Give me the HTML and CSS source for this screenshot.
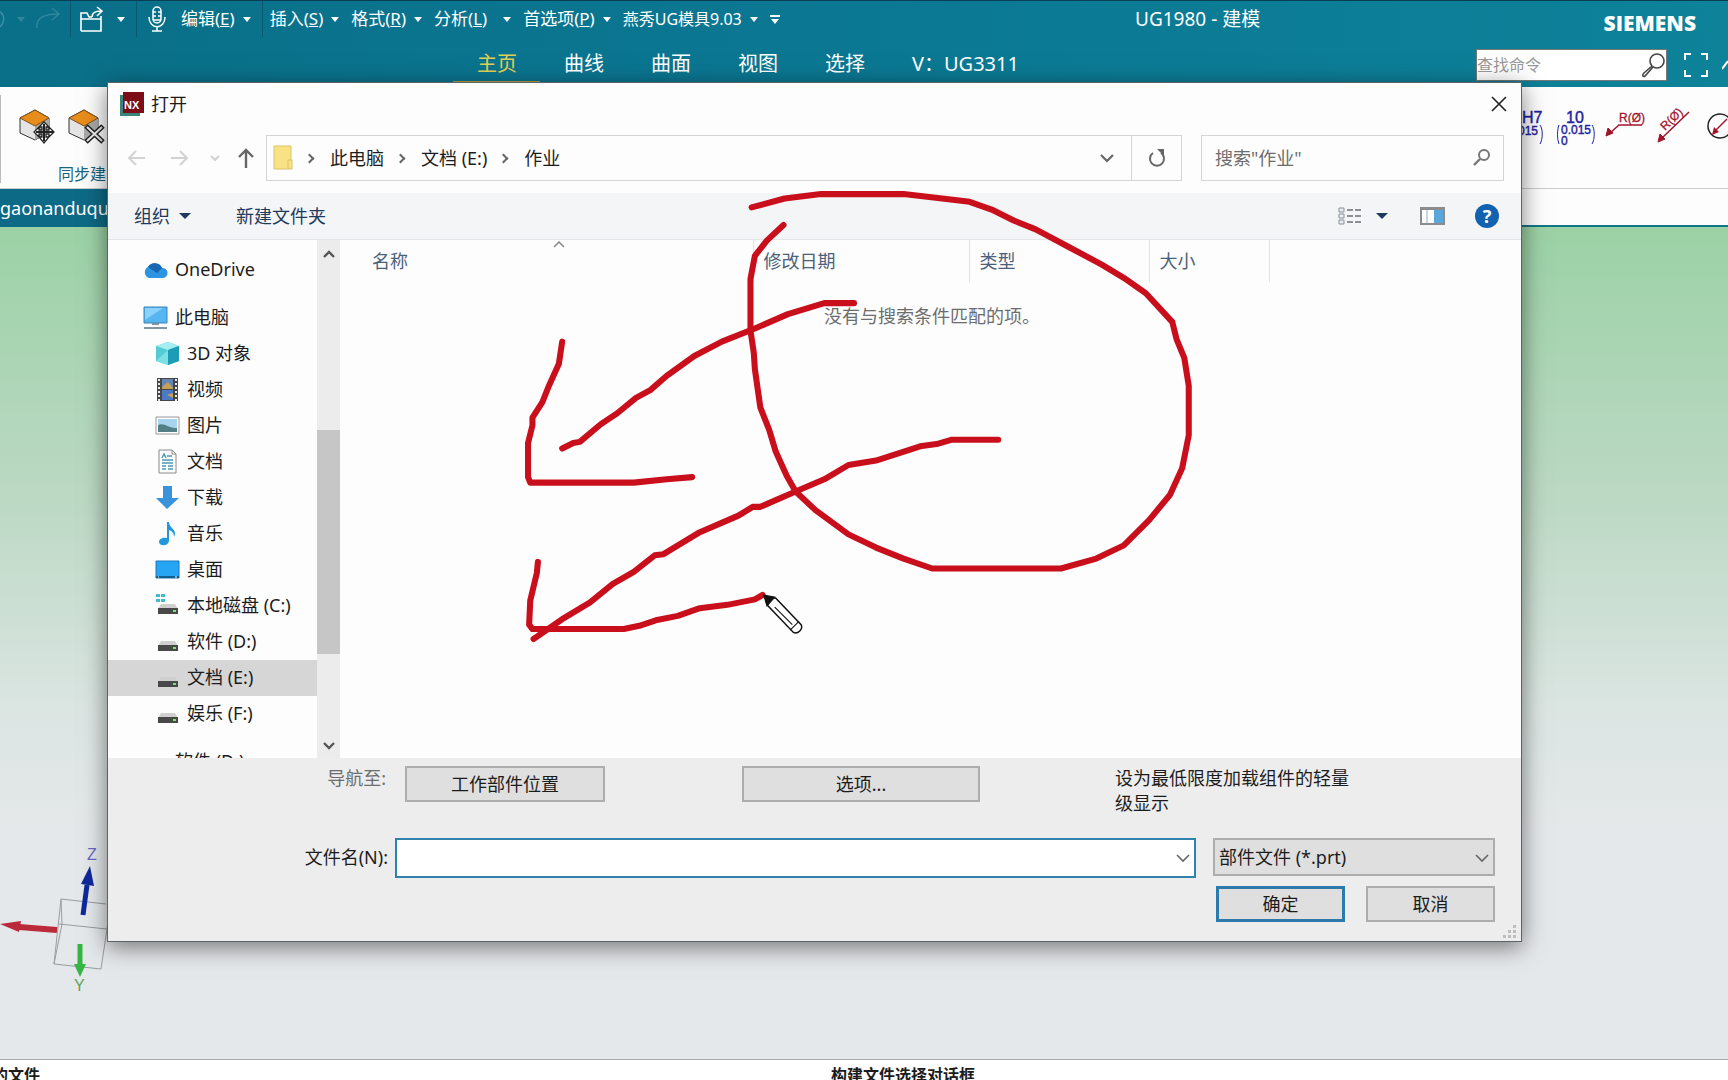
FILE: index.html
```html
<!DOCTYPE html>
<html lang="zh-CN">
<head>
<meta charset="utf-8">
<title>UG1980 - 建模</title>
<link rel="stylesheet" href="styles.css">
</head>
<body>
<div class="app">
  <header class="top">
    <div class="menubar">
      <div class="quick">
        <button class="qbtn undo" aria-label="撤消"><svg width="14" height="26" viewBox="0 0 14 26"><path d="M0 6c5 3 5 10 0 15" fill="none" stroke="#3a8fa6" stroke-width="1.500"/></svg><i class="tri dim"></i></button>
        <button class="qbtn redo" aria-label="重做"><svg width="28" height="28" viewBox="0 0 28 28"><path d="M3 23C2 13 9 9 25 9M18 3l7 6-7 6" fill="none" stroke="#2f869d" stroke-width="1.500"/></svg></button>
        <button class="qbtn open" aria-label="打开"><svg width="26" height="28" viewBox="0 0 26 28"><path d="M2 26V8h6l2 4h3M2 26h20V14H2M22 14V11M13 12c0-4 3-6 9-6M18 2l5 4-5 5" fill="none" stroke="#fff" stroke-width="1.600"/></svg><i class="tri"></i></button>
        <button class="qbtn mic" aria-label="语音"><svg width="20" height="28" viewBox="0 0 20 28"><rect x="6" y="2" width="8" height="16" rx="4" fill="none" stroke="#fff" stroke-width="1.500"/><path d="M2 12c0 13 16 13 16 0M10 22v4M5 26h10M6 7h3M11 7h3M6 11h3M11 11h3M6 15h8" fill="none" stroke="#fff" stroke-width="1.500"/></svg></button>
      </div>
      <nav class="menus">
        <button class="menu last">编辑(<u>E</u>)<i class="tri"></i></button>
        <button class="menu">插入(<u>S</u>)<i class="tri"></i></button>
        <button class="menu">格式(<u>R</u>)<i class="tri"></i></button>
        <button class="menu wide">分析(<u>L</u>)<i class="tri"></i></button>
        <button class="menu">首选项(<u>P</u>)<i class="tri"></i></button>
        <button class="menu mold">燕秀UG模具9.03<i class="tri"></i></button>
        <button class="more" aria-label="更多"><i class="tri"></i></button>
      </nav>
      <div class="apptitle">UG1980 - 建模</div>
      <div class="brand">SIEMENS</div>
    </div>
    <div class="tabbar">
      <nav class="tabs">
        <button class="tab on">主页</button>
        <button class="tab">曲线</button>
        <button class="tab">曲面</button>
        <button class="tab">视图</button>
        <button class="tab">选择</button>
        <button class="tab">V：UG3311</button>
      </nav>
      <div class="tabtools">
        <div class="find">
          <input class="findbox" type="text" aria-label="查找命令" placeholder="查找命令">
          <svg width="26" height="26" viewBox="0 0 26 26"><circle cx="17" cy="9" r="7" fill="#fff" stroke="#444" stroke-width="1.600"/><path d="M12 14L4 21c-3 3 0 5 2 2l7-8" fill="#fff" stroke="#444" stroke-width="1.600"/></svg>
        </div>
        <button class="qbtn" aria-label="全屏"><svg width="24" height="24" viewBox="0 0 24 24"><path d="M1 7V1h6M17 1h6v6M23 17v6h-6M7 23H1v-6" fill="none" stroke="#fff" stroke-width="2"/></svg></button>
        <svg width="6" height="20" viewBox="0 0 6 20"><path d="M0 14L6 6" stroke="#fff" stroke-width="2"/></svg>
      </div>
    </div>
  </header>

  <section class="ribbon">
    <div class="group">
      <div class="tools">
        <svg width="40" height="40" viewBox="0 0 40 40"><path d="M1 12l15-8 14 8v14l-14 8L1 27z" fill="#e4e4e4" stroke="#333"/><path d="M16 19l14-7v14l-14 8z" fill="#a9a9a9"/><path d="M1 12l15-8 14 8-14 8z" fill="#e88d1c" stroke="#80501a"/><path d="M25 16l5 5h-3v3h3v-3l5 5-5 5v-3h-3v3h3l-5 6-5-6h3v-3h-3v3l-5-5 5-5v3h3v-3h-3z" fill="#fff" stroke="#222" stroke-width="1.300"/><path d="M25 18v17M17 26h17" stroke="#222" stroke-width="2"/></svg>
        <svg width="40" height="40" viewBox="0 0 40 40"><path d="M1 12l15-8 14 8v14l-14 8L1 27z" fill="#e4e4e4" stroke="#333"/><path d="M16 19l14-7v14l-14 8z" fill="#a9a9a9"/><path d="M1 12l15-8 14 8-14 8z" fill="#e88d1c" stroke="#80501a"/><path d="M18 20l17 16M35 20L18 36" stroke="#222" stroke-width="5"/><path d="M19 21l15 14M34 21L19 35" stroke="#eee" stroke-width="2"/></svg>
      </div>
      <div class="groupname">同步建</div>
    </div>
    <svg class="dims" width="212" height="44" viewBox="0 0 212 44">
      <g fill="#22229e" stroke="#22229e" stroke-width=".4" class="dimtext"><text x="6" y="16" font-size="16">H7</text><text x="2" y="28" font-size="12">015</text><text x="50" y="16" font-size="16">10</text><text x="45" y="27" font-size="12">0.015</text><text x="45" y="38" font-size="12">0</text></g>
      <path d="M24 18c3 4 3 14 0 19M43 18c-2 5-2 14 0 19M76 18c3 4 3 14 0 19" fill="none" stroke="#22229e"/>
      <g stroke="#a3142a" fill="#a3142a"><path d="M126 18H103L94 26" fill="none" stroke-width="1.500"/><path d="M90 29l2-8 5 5z"/><path d="M173 5L146 31" fill="none" stroke-width="1.500"/><path d="M142 35l2-8 5 5z"/></g>
      <g class="dimtext" fill="#a3142a" stroke="#a3142a" stroke-width=".3"><text x="103" y="15" font-size="12">R(Ø)</text><text transform="translate(149 24) rotate(-44)" font-size="12">R(Ø)</text></g>
      <circle cx="204" cy="19" r="12" fill="none" stroke="#222" stroke-width="1.500"/><path d="M199 24l12-12" stroke="#a3142a" stroke-width="1.500"/><path d="M196 28l2-8 5 5z" fill="#a3142a"/>
    </svg>
  </section>
  <div class="docstrip"><button class="doctab">gaonanduqu</button></div>

  <main class="viewport">
    <svg class="triad" width="110" height="170" viewBox="0 0 110 170">
      <path d="M61 55l45 5M61 55l-7 65 47 5 9-60M61 55l1 25-8 40M59 80l48 5" fill="none" stroke="#979da0"/>
      <path d="M83 71l4-30" stroke="#10299a" stroke-width="5"/><path d="M90 22l4 20-13-2z" fill="#10299a"/>
      <path d="M57 86l-38-3" stroke="#ba2a3a" stroke-width="6"/><path d="M0 80l21-3-2 11z" fill="#ba2a3a"/>
      <path d="M80 100v22" stroke="#35b544" stroke-width="5"/><path d="M74 120h12l-6 13z" fill="#35b544"/>
      <text class="dimtext" x="87" y="16" font-size="16" fill="#6c67c4">Z</text>
      <text class="dimtext" x="74" y="147" font-size="16" fill="#5aa45e">Y</text>
    </svg>
  </main>
  <footer class="status"><div class="left"><span>的文件</span></div><div class="center">构建文件选择对话框</div></footer>
</div>

<div class="dialog" role="dialog" aria-label="打开">
  <div class="titlebar">
    <svg width="25" height="25" viewBox="0 0 25 25"><path d="M0 3h20v21H0z" fill="#3b8277"/><path d="M3 0h21v21H3z" fill="#7c0c16"/><text class="nx" x="4" y="17" font-size="11" fill="#fff">NX</text></svg>
    <h1>打开</h1>
    <button class="plain" aria-label="关闭"><svg width="16" height="16" viewBox="0 0 16 16"><path d="M1 1l14 14M15 1L1 15" stroke="#222" stroke-width="1.600"/></svg></button>
  </div>
  <div class="navrow">
    <div class="arrows">
      <button class="plain" aria-label="后退"><svg width="18" height="16" viewBox="0 0 18 16"><path d="M18 8H2M9 1L2 8l7 7" fill="none" stroke="#d2d2d2" stroke-width="2"/></svg></button>
      <button class="plain" aria-label="前进"><svg width="18" height="16" viewBox="0 0 18 16"><path d="M0 8h16M9 1l7 7-7 7" fill="none" stroke="#d2d2d2" stroke-width="2"/></svg></button>
      <button class="plain" aria-label="最近"><svg width="10" height="7" viewBox="0 0 10 7"><path d="M1 1l4 4 4-4" fill="none" stroke="#d2d2d2" stroke-width="2"/></svg></button>
      <button class="plain" aria-label="上一级"><svg width="18" height="20" viewBox="0 0 18 20"><path d="M9 20V2M2 9l7-7 7 7" fill="none" stroke="#666" stroke-width="2.400"/></svg></button>
    </div>
    <div class="address">
      <svg width="20" height="26" viewBox="0 0 20 26"><path d="M1 1h17v14h1v9H1z" fill="#f8e284" stroke="#ddc269"/><path d="M15 24v-9h4" fill="none" stroke="#ddc269"/></svg>
      <i class="sep"></i><a href="#">此电脑</a><i class="sep"></i><a href="#">文档 (E:)</a><i class="sep"></i><a href="#">作业</a>
      <button class="plain drop" aria-label="历史"><svg width="14" height="9" viewBox="0 0 14 9"><path d="M1 1l6 6 6-6" fill="none" stroke="#666" stroke-width="2.200"/></svg></button>
      <button class="plain refresh" aria-label="刷新"><svg width="18" height="18" viewBox="0 0 18 18"><path d="M13 4a7 7 0 1 1-8 0" fill="none" stroke="#666" stroke-width="2"/><path d="M9 0h7v7z" fill="#666"/></svg></button>
    </div>
    <div class="search">
      <input type="text" aria-label="搜索" placeholder="搜索&quot;作业&quot;">
      <svg width="18" height="18" viewBox="0 0 18 18"><circle cx="11" cy="6" r="5" fill="none" stroke="#777" stroke-width="2"/><path d="M7 10l-6 6" stroke="#777" stroke-width="2.400"/></svg>
    </div>
  </div>
  <div class="toolbar">
    <button class="plain tb">组织<i class="tri navy"></i></button>
    <button class="plain tb">新建文件夹</button>
    <button class="plain view" aria-label="视图"><svg width="24" height="18" viewBox="0 0 24 18"><path d="M1 1h5v4H1zM1 7h5v4H1zM1 13h5v4H1z" fill="#e8eef3" stroke="#8a9096"/><path d="M9 3h6M17 3h6M9 9h6M17 9h6M9 15h6M17 15h6" stroke="#8a9096" stroke-width="2"/></svg><i class="tri navy"></i></button>
    <button class="plain" aria-label="预览窗格"><svg width="25" height="18" viewBox="0 0 25 18"><path d="M1 1h23v16H1z" fill="#fff" stroke="#8c8c8c" stroke-width="2"/><path d="M0 0h25v3H0z" fill="#8c8c8c"/><path d="M14 3h9v13h-9z" fill="#5aa7dc"/><path d="M7 3v13" stroke="#aaa"/></svg></button>
    <button class="plain help" aria-label="帮助">?</button>
  </div>
  <div class="body">
    <ul class="tree">
      <li><svg width="25" height="25" viewBox="0 0 25 25"><path d="M6 21a6 6 0 0 1-1-11 8 8 0 0 1 14 1 5 5 0 0 1 1 10z" fill="#2c94e0"/><path d="M5 10a8 8 0 0 1 14 1l-5 5z" fill="#1666b4"/></svg>OneDrive</li>
      <li class="pc"><svg width="25" height="25" viewBox="0 0 25 25"><path d="M1 2h23v16H1z" fill="#55b6f2" stroke="#3d83b8"/><path d="M2 15L20 3H2z" fill="#8bd2fb"/><path d="M9 19h7M1 23h23" stroke="#8395a3" stroke-width="2"/></svg>此电脑</li>
      <li class="sub"><svg width="25" height="25" viewBox="0 0 25 25"><path d="M1 5l12-4 11 4v15l-11 4-12-4z" fill="#53cbd5"/><path d="M1 5l12-4 11 4-11 4z" fill="#a5edf0"/><path d="M13 9l11-4v15l-11 4z" fill="#1c9db5"/><path d="M1 20l12-11v15z" fill="#7ddfe4"/></svg>3D 对象</li>
      <li class="sub"><svg width="25" height="25" viewBox="0 0 25 25"><path d="M2 1h21v23H2z" fill="#464646"/><path d="M7 2h11v10H7z" fill="#6486b6"/><path d="M7 13h11v10H7z" fill="#4c78c4"/><path d="M7 10l6-5 5 6v1H7zM12 18l6-2v5z" fill="#c5a153"/><path d="M4 2v22M21 2v22" stroke="#e8e8e8" stroke-width="2" stroke-dasharray="2 2"/></svg>视频</li>
      <li class="sub"><svg width="25" height="25" viewBox="0 0 25 25"><path d="M1 4h23v17H1z" fill="#fff" stroke="#999"/><path d="M3 6h19v13H3z" fill="#a9d4ee"/><path d="M3 12c6-3 10 3 19 3v4H3z" fill="#547f86"/></svg>图片</li>
      <li class="sub"><svg width="25" height="25" viewBox="0 0 25 25"><path d="M4 1h13l4 4v19H4z" fill="#fff" stroke="#888"/><path d="M17 1v4h4" fill="none" stroke="#888"/><path d="M7 9l2-4 2 4M12 7h5M7 11h11M7 14h11M7 17h4M7 20h4M13 17h5M13 20h5" fill="none" stroke="#4a9bb8" stroke-width="1.500"/></svg>文档</li>
      <li class="sub"><svg width="25" height="25" viewBox="0 0 25 25"><path d="M8 1h9v12h7L12 24 1 13h7z" fill="#3a93da"/></svg>下载</li>
      <li class="sub"><svg width="25" height="25" viewBox="0 0 25 25"><path d="M12 1h2c0 6 9 8 5 15 0-4-2-6-5-7v11c-1 6-10 5-10 1 0-3 4-5 8-4z" fill="#2099dc"/></svg>音乐</li>
      <li class="sub"><svg width="25" height="25" viewBox="0 0 25 25"><path d="M1 4h23v17H1z" fill="#25a5f4" stroke="#1979bc"/><path d="M1 19h23v2H1z" fill="#125d92"/><path d="M3 20h1M20 20h2" stroke="#fff"/></svg>桌面</li>
      <li class="sub"><svg width="25" height="25" viewBox="0 0 25 25"><path d="M1 1h4v3H1zM6 1h4v3H6zM1 6h4v3H1zM6 6h4v3H6z" fill="#42bccb"/><path d="M6 11h14l3 5H3z" fill="#cfcfcf"/><path d="M3 15h20v6H3z" fill="#484848"/><path d="M18 18h3" stroke="#7be083" stroke-width="2"/></svg>本地磁盘 (C:)</li>
      <li class="sub"><svg width="25" height="25" viewBox="0 0 25 25"><path d="M6 12h14l3 5H3z" fill="#cfcfcf"/><path d="M3 16h20v6H3z" fill="#484848"/><path d="M18 19h3" stroke="#7be083" stroke-width="2"/></svg>软件 (D:)</li>
      <li class="sub sel"><svg width="25" height="25" viewBox="0 0 25 25"><path d="M6 12h14l3 5H3z" fill="#cfcfcf"/><path d="M3 16h20v6H3z" fill="#484848"/><path d="M18 19h3" stroke="#7be083" stroke-width="2"/></svg>文档 (E:)</li>
      <li class="sub"><svg width="25" height="25" viewBox="0 0 25 25"><path d="M6 12h14l3 5H3z" fill="#cfcfcf"/><path d="M3 16h20v6H3z" fill="#484848"/><path d="M18 19h3" stroke="#7be083" stroke-width="2"/></svg>娱乐 (F:)</li>
      <li class="extra">软件 (D:)</li>
    </ul>
    <div class="scroll">
      <svg width="12" height="8" viewBox="0 0 12 8"><path d="M1 7l5-5 5 5" fill="none" stroke="#555" stroke-width="2.400"/></svg>
      <div class="track"><div class="thumb"></div></div>
      <svg width="12" height="8" viewBox="0 0 12 8"><path d="M1 1l5 5 5-5" fill="none" stroke="#555" stroke-width="2.400"/></svg>
    </div>
    <div class="files">
      <table>
        <thead><tr><th class="c1">名称<svg class="sort" width="12" height="7" viewBox="0 0 12 7"><path d="M1 6l5-5 5 5" fill="none" stroke="#888" stroke-width="1.500"/></svg></th><th class="c2">修改日期</th><th class="c3">类型</th><th class="c4">大小</th><th class="c5"></th></tr></thead>
        <tbody><tr><td colspan="5">没有与搜索条件匹配的项。</td></tr></tbody>
      </table>
    </div>
  </div>
  <div class="bottom">
    <div class="row nav">
      <span class="lab dimlab">导航至:</span>
      <button class="btn work">工作部件位置</button>
      <button class="btn opt">选项...</button>
      <p class="note">设为最低限度加载组件的轻量级显示</p>
    </div>
    <div class="row file">
      <label class="lab" for="fname">文件名(N):</label>
      <div class="combo"><input id="fname" type="text"><svg width="14" height="9" viewBox="0 0 14 9"><path d="M1 1l6 6 6-6" fill="none" stroke="#666" stroke-width="1.600"/></svg></div>
      <div class="pick"><select aria-label="文件类型"><option>部件文件 (*.prt)</option></select><svg width="14" height="9" viewBox="0 0 14 9"><path d="M1 1l6 6 6-6" fill="none" stroke="#666" stroke-width="1.600"/></svg></div>
    </div>
    <div class="row acts">
      <button class="btn ok">确定</button>
      <button class="btn">取消</button>
    </div>
    <svg class="grip" width="14" height="14" viewBox="0 0 14 14"><path d="M10 0h3v3h-3zM5 5h3v3H5zM10 5h3v3h-3zM0 10h3v3H0zM5 10h3v3H5zM10 10h3v3h-3z" fill="#bdbdbd"/></svg>
  </div>
  <svg class="ink" width="683" height="468" viewBox="470 165 620 425">
    <g fill="none" stroke="#c90f1c" stroke-width="5.500" stroke-linecap="round" stroke-linejoin="round">
      <path d="M682 188L712 180 745 176H820L855 180 880 183 900 190 920 200 940 208 970 224 1000 240 1020 252 1040 266 1064 292 1068 308 1075 325 1079 350V395L1073 425 1062 449 1043 472 1020 495 995 507 963 516H846L820 507 795 497 770 485 740 463 722 446 714 432 704 410 698 390 690 370 685 335 684 320 681 300V253L685 232 696 218 711 204"/>
      <path d="M775 275H748L715 285 685 298 655 310 630 323 605 341 590 354 577 361 560 375 545 385 526 401 520 402 510 407"/>
      <path d="M510 310L507 330 498 350 492 365 483 379 483 386 479 402V433L481 438H575L605 435 628 433"/>
      <path d="M906 399H864L850 403 835 405 795 418 770 422 748 435 722 446 690 460 683 460 670 468 635 483 602 503 594 504 575 519 556 530 535 547 510 562 484 580"/>
      <path d="M488 510L487 520 481 545 480 567 483 571H566L580 568 595 563 615 559 635 552 660 549 685 544 692 540"/>
    </g>
    <path d="M694 541l10 2 23 24c2 4-3 9-7 7l-24-25z" fill="#fff" stroke="#111" stroke-width="1.300"/><path d="M693 540l10 2-7 8zM717 572l8-8" fill="#111" stroke="#111"/><path d="M703 551l16 16" stroke="#111"/>
  </svg>
</div>
</body>
</html>
```
FILE: styles.css
```css
* { box-sizing: border-box; }
body {
  margin: 0;
  height: 100vh;
  overflow: hidden;
  font-family: "Noto Sans", "Noto Sans CJK SC", sans-serif;
  font-size: 18px;
  line-height: 24px;
  color: #1c1c1c;
}
button, input, select { font: inherit; color: inherit; }
button { cursor: pointer; }
svg { display: block; flex: none; }
.dimtext { font-family: "Liberation Sans", Arial, sans-serif; }
.nx { font-family: "Liberation Sans", Arial, sans-serif; font-weight: bold; }
.app { display: flex; flex-direction: column; height: 100vh; }

.tri {
  display: inline-block;
  flex: none;
  border: 4px solid transparent;
  border-top: 5px solid #fff;
  border-bottom: 0;
}
.tri.dim { border-top-color: #2f869d; }
.tri.navy { border-width: 6px 6px 0; border-top-color: #1f3a5c; }

.top {
  height: 87px;
  border-top: 1px solid #0b3d55;
  background: linear-gradient(90deg, #0a6f88, #0b7893 50%, #0d8299);
  color: #fff;
}
.menubar { display: flex; height: 36px; align-items: center; font-size: 17px; }
.quick { display: flex; height: 36px; }
.qbtn {
  display: flex;
  align-items: center;
  gap: 12px;
  padding: 0;
  border: 0;
  background: none;
}
.undo { width: 34px; gap: 3px; }
.redo { width: 37px; border-right: 1px solid #0a5870; }
.open { width: 66px; padding-left: 8px; border-right: 1px solid #0a5870; }
.mic { width: 38px; padding-left: 10px; }
.menus { display: flex; align-items: center; width: 960px; height: 36px; }
.menu {
  display: flex;
  align-items: center;
  height: 36px;
  padding: 0 6px;
  border: 0;
  background: none;
  white-space: nowrap;
}
.menu .tri { margin-left: 8px; }
.menu.last { padding-right: 11px; margin-right: 1px; border-right: 1px solid #0a5870; }
.menu.wide .tri { margin-left: 16px; }
.menu.mold { font-size: 16px; }
.more {
  margin-left: 6px;
  padding: 2px 1px 0;
  border: 0;
  border-top: 2px solid #fff;
  background: none;
  font-size: 0;
  line-height: 0;
}
.apptitle { font-size: 19px; }
.brand {
  margin-left: auto;
  padding: 8px 32px 0 0;
  font: 800 21px/24px "Open Sans", sans-serif;
}
.tabbar { display: flex; height: 50px; justify-content: space-between; align-items: flex-start; }
.tabs { display: flex; padding-left: 453px; }
.tab {
  height: 46px;
  padding: 10px 23px 0 24px;
  border: 0;
  border-bottom: 2px solid transparent;
  background: none;
  font-size: 20px;
}
.tab.on { color: #e3cf52; border-bottom-color: #b8a040; }
.tabtools { display: flex; align-items: center; padding-top: 12px; }
.find {
  display: flex;
  align-items: center;
  width: 191px;
  height: 32px;
  margin-right: 17px;
  border: 1px solid #777;
  background: #fff;
}
.findbox { flex: 1; min-width: 0; padding: 0; border: 0; outline: 0; background: none; font-size: 16px; }
.findbox::placeholder { color: #999; opacity: 1; }
.tabtools > .qbtn { margin-right: 14px; }

.ribbon {
  display: flex;
  justify-content: space-between;
  height: 102px;
  border-bottom: 1px solid #ccc;
  background: #fdfdfd;
}
.group { margin: 8px 0 5px; padding: 11px 0 0 18px; border-left: 1px solid #bbb; }
.tools { display: flex; gap: 9px; }
.groupname { padding: 16px 0 0 39px; font-size: 16px; color: #17647b; }
.dims { margin-top: 20px; }
.docstrip { height: 38px; border-bottom: 2px solid #127688; background: #fdfdfd; }
.doctab { height: 38px; padding: 0 14px 0 0; border: 0; background: #0d6a86; color: #fff; font-size: 18px; }

.viewport {
  position: relative;
  flex: 1;
  background: linear-gradient(#9bd1a5, #bcd9c4 33%, #dbe5e2 58%, #e5e8ea 74%);
}
.triad { position: absolute; left: 0; bottom: 45px; }
.status {
  display: flex;
  height: 21px;
  padding-top: 3px;
  border-top: 1px solid #aaa;
  overflow: hidden;
  background: #fff;
  font-size: 16px;
  font-weight: bold;
}
.status .left { display: flex; justify-content: flex-end; width: 40px; white-space: nowrap; overflow: hidden; }
.status .center { flex: 1; text-align: center; padding-left: 38px; }

.dialog {
  position: absolute;
  inset: 82px 206px 138px 107px;
  display: flex;
  flex-direction: column;
  border: 1px solid #5d6466;
  background: #fdfdfd;
  box-shadow: 0 5px 22px rgba(0, 0, 0, .5);
}
.plain { display: flex; align-items: center; padding: 0; border: 0; background: none; }
.titlebar { display: flex; align-items: center; gap: 6px; height: 42px; padding: 0 14px 0 12px; }
.titlebar h1 { flex: 1; margin: 0; font-size: 18px; font-weight: 400; }
.navrow { display: flex; align-items: center; height: 68px; padding: 0 17px 2px 19px; }
.arrows { display: flex; align-items: center; width: 139px; }
.arrows .plain:nth-child(2) { margin-left: 26px; }
.arrows .plain:nth-child(3) { margin-left: 21px; }
.arrows .plain:nth-child(4) { margin-left: 17px; }
.address {
  display: flex;
  align-items: center;
  flex: 1;
  height: 46px;
  padding-left: 6px;
  border: 1px solid #d4d4d4;
}
.address a { color: #1c1c1c; text-decoration: none; }
.sep {
  width: 7px;
  height: 7px;
  margin: 0 17px 0 13px;
  border: solid #666;
  border-width: 2px 2px 0 0;
  transform: rotate(45deg);
}
.drop { margin: 0 17px 0 auto; }
.refresh { width: 50px; height: 44px; justify-content: center; border-left: 1px solid #d4d4d4; }
.search {
  display: flex;
  align-items: center;
  width: 303px;
  height: 46px;
  margin-left: 19px;
  padding: 0 12px 0 13px;
  border: 1px solid #d4d4d4;
}
.search input { flex: 1; min-width: 0; padding: 0; border: 0; outline: 0; background: none; }
.search input::placeholder { color: #6d6d6d; opacity: 1; }
.toolbar {
  display: flex;
  align-items: center;
  height: 47px;
  padding: 0 22px 0 26px;
  gap: 32px;
  border-bottom: 1px solid #e3e6e8;
  background: #f3f5f7;
  color: #1f3a5c;
}
.tb { gap: 9px; }
.tb + .tb { margin-left: 13px; }
.view { margin-left: auto; gap: 14px; }
.help {
  width: 24px;
  height: 24px;
  justify-content: center;
  margin-left: -2px;
  border-radius: 12px;
  background: #1262b0;
  color: #fff;
  font-weight: bold;
}
.body { display: flex; flex: 1; min-height: 0; }
.tree { width: 209px; margin: 0; padding: 12px 0 0; list-style: none; overflow: hidden; }
.tree li { display: flex; align-items: center; gap: 7px; height: 36px; padding: 0 0 2px 35px; white-space: nowrap; }
.tree .pc { margin-top: 12px; }
.tree .sub { padding-left: 47px; }
.tree .sel { background: #d6d6d6; }
.tree .extra { margin-top: 12px; padding-left: 67px; }
.scroll {
  display: flex;
  flex-direction: column;
  align-items: center;
  width: 23px;
  padding: 10px 0 8px;
  background: #ececec;
}
.track { flex: 1; width: 23px; padding: 172px 0 88px; }
.thumb { height: 100%; background: #c6c6c6; }
.files { flex: 1; margin-left: 3px; }
.files table { width: 100%; border-collapse: collapse; table-layout: fixed; }
.files th {
  position: relative;
  height: 42px;
  padding: 0 0 0 10px;
  border-right: 1px solid #e2e2e2;
  text-align: left;
  font-weight: 400;
  color: #4c607a;
}
.files .c1 { width: 410px; padding-left: 29px; }
.files .c2 { width: 216px; }
.files .c3 { width: 180px; }
.files .c4 { width: 120px; }
.files .c5 { border: 0; }
.sort { position: absolute; right: 188px; top: 1px; }
.files td { padding: 22px 0 0; text-align: center; color: #6d6d6d; }

.bottom { position: relative; height: 183px; padding: 8px 26px 0 0; background: #ededed; }
.row { display: flex; }
.lab { width: 280px; margin-right: 7px; text-align: right; }
.row.nav { height: 72px; }
.dimlab { width: 278px; margin-right: 19px; color: #6d6d6d; }
.btn {
  width: 129px;
  height: 36px;
  padding: 0;
  border: 2px solid #adadad;
  background: #dfdfdf;
}
.work { width: 200px; }
.opt { width: 238px; margin-left: 137px; }
.note { width: 236px; margin: 0 0 0 135px; line-height: 25px; }
.file { height: 48px; }
.file .lab { padding-top: 7px; }
.combo, .pick { position: relative; }
.combo { flex: 1; margin-right: 17px; }
.combo input { display: block; width: 100%; height: 40px; padding: 0 30px 0 6px; border: 2px solid #2f82ab; outline: 0; background: #fff; }
.combo svg, .pick svg { position: absolute; right: 6px; top: 16px; pointer-events: none; }
.pick { width: 282px; }
.pick select { appearance: none; width: 100%; height: 38px; padding: 0 30px 0 4px; border: 2px solid #adadad; border-radius: 0; background: #dfdfdf; }
.acts { justify-content: flex-end; gap: 21px; }
.ok { border: 3px solid #2c7bab; }
.grip { position: absolute; right: 4px; bottom: 2px; }
.ink { position: absolute; left: 410px; top: 99px; pointer-events: none; }
```
